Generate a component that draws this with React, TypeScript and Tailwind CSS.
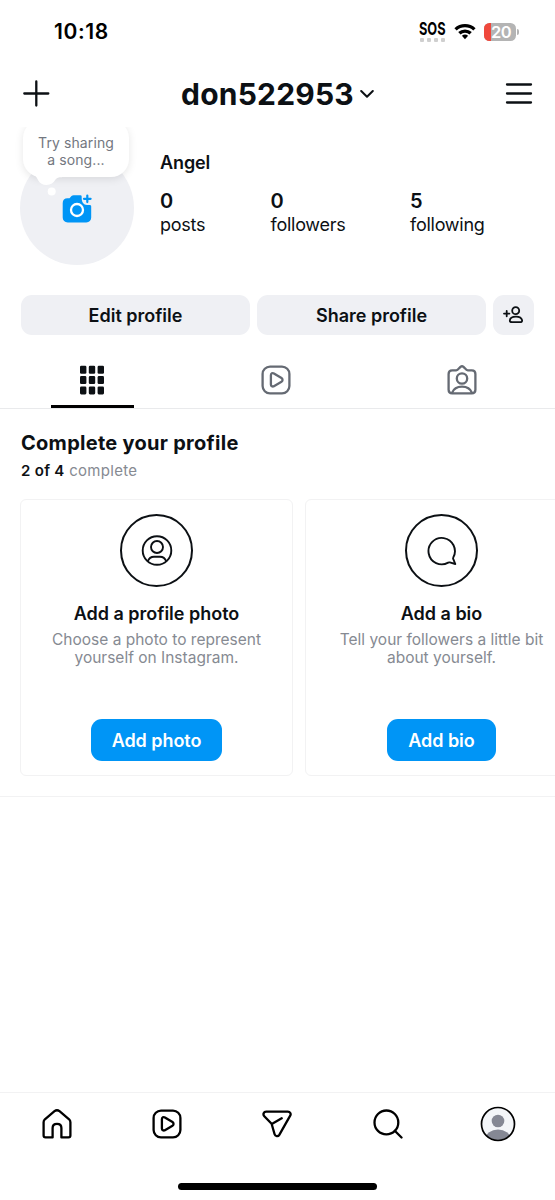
import type { ReactNode } from "react"

function ReelsIcon({ className }: { className?: string }) {
  return (
    <svg className={className} width="30" height="30" viewBox="0 0 30 30" fill="none" stroke="currentColor" strokeWidth="2.3" strokeLinejoin="round">
      <rect x="1.6" y="1.6" width="26.8" height="26.8" rx="7.4" />
      <path d="M9.9 10.2c0-1.7 1.6-2.6 3-1.8l7.6 4.7c1.4.9 1.4 2.8 0 3.6l-7.6 4.5c-1.4.8-3-.1-3-1.8z" />
    </svg>
  )
}

function StatusBar() {
  return (
    <div className="flex h-[62px] shrink-0 items-center pt-[1px] pr-[36px] pl-[54px] text-black">
      <span className="text-[21px] font-semibold tracking-[0.6px]">10:18</span>
      <div className="ml-auto flex items-center">
        <div className="flex w-[27px] flex-col items-start">
          <span className="h-[15px] origin-left scale-x-[0.71] text-[18px] leading-[15px] font-bold">SOS</span>
          <div className="mt-[2px] flex gap-[3px] pl-[1px]">
            {[0, 1, 2, 3].map((n) => (
              <span key={n} className="size-[4px] rounded-[1px] bg-[#cfcfcf]" />
            ))}
          </div>
        </div>
        <svg className="ml-[8px]" width="22" height="17" viewBox="0 0 22 17">
          <path d="M.4 5.3A15.5 15.5 0 0 1 21.6 5.3L19.3 7.6A12 12 0 0 0 2.7 7.6Z" fill="#000" />
          <path d="M4.2 9.1A10 10 0 0 1 17.8 9.1L15.5 11.4A6.7 6.7 0 0 0 6.5 11.4Z" fill="#000" />
          <path d="M7.9 12.8A4.7 4.7 0 0 1 14.1 12.8L11 16.2Z" fill="#000" />
        </svg>
        <div className="ml-[8px] flex h-[18px] w-[32px] overflow-hidden rounded-[5.5px] bg-[#b4b4b4]">
          <span className="w-[7px] bg-[#f0483c]" />
          <span className="w-[20px] text-center text-[16.5px] leading-[18px] font-semibold tracking-[-0.5px] text-white">20</span>
        </div>
        <span className="ml-[1px] h-[6px] w-[2px] rounded-r-full bg-[#b4b4b4]" />
      </div>
    </div>
  )
}

function Header() {
  return (
    <header className="mb-[2px] flex h-[63px] shrink-0 items-center justify-between pr-[22px] pl-[23px]">
      <svg width="27" height="27" viewBox="0 0 27 27" stroke="currentColor" strokeWidth="2.3" strokeLinecap="round">
        <path d="M13.3 1.5v24M1.3 13.5h24" />
      </svg>
      <div className="flex items-center">
        <h1 className="text-[30px] leading-none font-bold tracking-[0.2px]">don522953</h1>
        <svg className="ml-[6px]" width="14" height="10" viewBox="0 0 14 10" fill="none" stroke="currentColor" strokeWidth="2" strokeLinecap="round" strokeLinejoin="round">
          <path d="M1.2 2l5.8 5.8L12.8 2" />
        </svg>
      </div>
      <svg width="28" height="22" viewBox="0 0 28 22" stroke="currentColor" strokeWidth="2.3" strokeLinecap="round">
        <path d="M2 1.5h24M2 10.5h24M2 19.5h24" />
      </svg>
    </header>
  )
}

function Stat({ value, label, className }: { value: string; label: string; className?: string }) {
  return (
    <div className={className}>
      <div className="text-[20px] leading-[23px] font-semibold">{value}</div>
      <div className="text-[18px] leading-[23px] tracking-[-0.25px]">{label}</div>
    </div>
  )
}

function Profile() {
  return (
    <section className="relative flex h-[168px] shrink-0 overflow-hidden pl-[20px]">
      <div className="mt-[24px] flex size-[114px] shrink-0 items-center justify-center rounded-full bg-[#eff0f4]">
        <svg className="mt-px text-[#0095f6]" width="30" height="30" viewBox="0 0 30 30" fill="none">
          <path d="M5.5 4.3H7.5L9.5 2.1C10.1 1.5 10.8 1.2 11.7 1.2H18.5C20 1.2 19.7 3 19.7 4.5C19.7 8 21.5 11 25 11H27.5C28.6 11 29.2 11.5 29.2 12.5V23.5C29.2 26.5 27.3 28.4 24.3 28.4H5.7C2.7 28.4.7 26.5.7 23.5V9.2C.7 6.2 2.5 4.3 5.5 4.3Z" fill="currentColor" />
          <circle cx="15" cy="16" r="6" stroke="#fff" strokeWidth="2.3" />
          <path d="M25.3 1.5v6.6M22 4.8h6.6" stroke="currentColor" strokeWidth="2.2" strokeLinecap="round" />
        </svg>
      </div>

      {/* note bubble, its top runs under the header */}
      <div className="absolute top-[-7px] left-[23px] flex h-[57px] w-[106px] items-end justify-center rounded-[18px] bg-white pb-[9px] text-center text-[14px] leading-[17px] tracking-[0.1px] text-[#737780] shadow-[0_2px_9px_rgba(0,0,0,0.1)]">
        <span>
          Try sharing
          <br />a song...
        </span>
      </div>
      <svg className="absolute top-[43px] left-[30px]" width="36" height="28" viewBox="0 0 36 28" fill="#fff">
        <path d="M3 4C6 6 7 8 8.3 10.5C10 13.5 12.5 14.9 16.5 14.9C21 14.9 23.5 13 25.5 9.5C26.8 7.6 28.5 7.2 32 7.2V2H3Z" />
        <circle cx="21.7" cy="21.5" r="4" />
      </svg>

      <div className="ml-[26px] pt-[24px]">
        <div className="text-[18px] leading-[24px] font-semibold tracking-[-0.1px]">Angel</div>
        <div className="mt-[15px] flex">
          <Stat className="w-[110.5px]" value="0" label="posts" />
          <Stat className="w-[139.5px]" value="0" label="followers" />
          <Stat value="5" label="following" />
        </div>
      </div>
    </section>
  )
}

function Actions() {
  return (
    <div className="flex h-[40px] shrink-0 gap-[7px] pr-[21px] pl-[21px] text-[18px] font-semibold">
      <button className="flex-1 rounded-[11px] bg-[#eff0f4]">Edit profile</button>
      <button className="flex-1 rounded-[11px] bg-[#eff0f4]">Share profile</button>
      <button className="flex w-[41px] items-center justify-center rounded-[11px] bg-[#eff0f4]" aria-label="Discover people">
        <svg className="mr-px" width="20" height="18" viewBox="0 0 20 18" fill="none" stroke="currentColor" strokeWidth="1.8" strokeLinecap="round">
          <circle cx="12.7" cy="4.7" r="3.5" />
          <path d="M13 10.7C9.5 10.7 7 12.3 6.8 14.5C6.8 15.5 7.7 16.2 9 16.2H17C18.4 16.2 19.3 15.5 19.1 14.3C18.6 12.1 16.5 10.7 13 10.7ZM3.7 4.9V10.3M1 7.6H6.4" />
        </svg>
      </button>
    </div>
  )
}

function Tabs() {
  return (
    <div className="mt-[17px] grid h-[57px] shrink-0 grid-cols-3 border-b border-[#e9eaec] text-[#656a73]">
      <div className="relative flex h-[56px] items-center justify-center pr-px pb-px text-[#0c1014]">
        <svg width="24" height="30" viewBox="0 0 24 30" fill="currentColor">
          {[0.8, 11.1, 21.4].map((y) =>
            [0, 8.8, 17.6].map((x) => <rect key={`${x}-${y}`} x={x} y={y} width="6.4" height="8" rx="1.3" />)
          )}
        </svg>
        <span className="absolute bottom-0 left-[50.5px] h-[3px] w-[83px] bg-black" />
      </div>
      <div className="flex h-[55px] items-center justify-center pr-[3px]">
        <ReelsIcon />
      </div>
      <div className="flex h-[55px] items-center justify-center pr-[2px]">
        <svg width="30" height="30" viewBox="0 0 30 30" fill="none" stroke="currentColor" strokeWidth="2.3" strokeLinejoin="round">
          <path d="M5.2 5.3H9.2C10.6 5.3 11 4.7 12 3.3L13.5 1.9C14.4 1.1 15.6 1.1 16.5 1.9L18 3.3C19 4.7 19.4 5.3 20.8 5.3H24.8C27.2 5.3 28.4 6.5 28.4 8.9V24.8C28.4 27.2 27.2 28.4 24.8 28.4H5.2C2.8 28.4 1.6 27.2 1.6 24.8V8.9C1.6 6.5 2.8 5.3 5.2 5.3Z" />
          <circle cx="15" cy="13.5" r="5.2" />
          <path d="M5 28C6.5 24 10 21.7 15 21.7S23.5 24 25 28" />
        </svg>
      </div>
    </div>
  )
}

function Card({ icon, title, text, action }: { icon: ReactNode; title: string; text: string[]; action: string }) {
  return (
    <div className="flex h-[277px] w-[273px] shrink-0 flex-col items-center rounded-[6px] border border-[#f2f2f3] pt-[14px] text-center">
      <div className="flex size-[73px] items-center justify-center rounded-full border-2 border-[#0c1014]">{icon}</div>
      <h3 className="mt-[15px] text-[18px] leading-[24px] font-semibold">{title}</h3>
      <p className="mt-[5px] text-[15.5px] leading-[18px] whitespace-nowrap text-[#868a92]">
        {text[0]}
        <br />
        {text[1]}
      </p>
      <button className="mt-auto mb-[14px] h-[42px] rounded-[11px] bg-[#0095f6] px-[21px] text-[18px] font-semibold tracking-[-0.05px] text-white">{action}</button>
    </div>
  )
}

function CompleteProfile() {
  return (
    <section className="flex-1">
      <div className="h-[388px] overflow-hidden border-b border-[#f2f2f3] pt-[20px] pl-[20px]">
        <h2 className="pl-[1px] text-[20px] leading-[28px] font-bold tracking-[0.28px]">Complete your profile</h2>
        <p className="mt-[4px] pl-[1px] text-[15px] leading-[20px] tracking-[0.3px] text-[#868a92]">
          <span className="font-semibold text-[#0c1014]">2 of 4</span> complete
        </p>
        <div className="mt-[18px] flex gap-[12px]">
          <Card
            title="Add a profile photo"
            text={["Choose a photo to represent", "yourself on Instagram."]}
            action="Add photo"
            icon={
              <svg width="32" height="32" viewBox="0 0 32 32" fill="none" stroke="currentColor" strokeWidth="1.9">
                <circle cx="16" cy="15.5" r="14.3" />
                <circle cx="16" cy="12" r="6" />
                <path d="M6.8 26.3C8 23 10 21.7 13 21.7H19C22 21.7 24 23 25.2 26.3" />
              </svg>
            }
          />
          <Card
            title="Add a bio"
            text={["Tell your followers a little bit", "about yourself."]}
            action="Add bio"
            icon={
              <svg width="30" height="30" viewBox="0 0 30 30" fill="none" stroke="currentColor" strokeWidth="1.9" strokeLinejoin="round">
                <path d="M26.3 21.4A13.2 13.2 0 1 0 21.2 26.6Q22 26.2 22.8 26.4L28.3 28L26.2 22.9Q25.9 22.1 26.3 21.4Z" />
              </svg>
            }
          />
        </div>
      </div>
    </section>
  )
}

function BottomNav() {
  return (
    <nav className="h-[108px] shrink-0 border-t border-[#f2f2f3] text-black">
      <div className="grid h-[62px] grid-cols-5 items-center justify-items-center px-[2px]">
        <svg width="30" height="30" viewBox="0 0 30 30" fill="none" stroke="currentColor" strokeWidth="2.3" strokeLinejoin="round">
          <path d="M1.6 13.2C1.6 12 2 11.2 2.9 10.3L12.5 2.2C14 1 16 1 17.5 2.2L27.1 10.3C28 11.2 28.4 12 28.4 13.2V26.5C28.4 27.8 27.8 28.4 26.5 28.4H19.4V19C19.4 16.5 17.6 14.8 15 14.8S10.6 16.5 10.6 19V28.4H3.5C2.2 28.4 1.6 27.8 1.6 26.5Z" />
        </svg>
        <ReelsIcon />
        <svg width="30" height="28" viewBox="0 0 30 28" fill="none" stroke="currentColor" strokeWidth="2.3" strokeLinejoin="round" strokeLinecap="round">
          <path d="M4.2 1.6H25.8C28.2 1.6 29.3 3.8 28.2 5.7L17.3 24.9C16.1 26.9 13.2 26.5 12.6 24.3L9.6 13.8L2.3 6.2C.6 4.4 1.7 1.6 4.2 1.6ZM9.8 13.9L19.7 8.3" />
        </svg>
        <svg width="30" height="30" viewBox="0 0 30 30" fill="none" stroke="currentColor" strokeWidth="2.3" strokeLinecap="round">
          <circle cx="13.4" cy="13.4" r="11.9" />
          <path d="M22 22l6.5 6.5" />
        </svg>
        <svg width="36" height="36" viewBox="0 0 36 36">
          <defs>
            <clipPath id="avatar">
              <circle cx="18" cy="18" r="16" />
            </clipPath>
          </defs>
          <circle cx="18" cy="18" r="16.5" fill="#f3f5f8" />
          <g fill="#858894" clipPath="url(#avatar)">
            <circle cx="18" cy="15" r="6.3" />
            <ellipse cx="18" cy="33" rx="12.5" ry="9.5" />
          </g>
          <circle cx="18" cy="18" r="16.5" fill="none" stroke="#000" strokeWidth="1.7" />
        </svg>
      </div>
      <div className="mx-auto mt-[28px] h-[7px] w-[199px] rounded-full bg-black" />
    </nav>
  )
}

export default function App() {
  return (
    <div className="flex h-[1200px] w-[555px] flex-col overflow-hidden bg-white font-['Inter',sans-serif] text-[#0c1014]">
      <StatusBar />
      <Header />
      <Profile />
      <Actions />
      <Tabs />
      <CompleteProfile />
      <BottomNav />
    </div>
  )
}
